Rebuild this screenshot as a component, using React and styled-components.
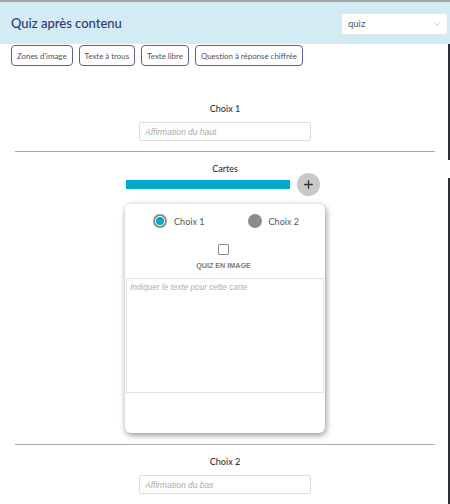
import React from "react";
import styled, { createGlobalStyle } from "styled-components";
import { ChevronDown, Plus } from "lucide-react";

const GlobalStyle = createGlobalStyle`
  body {
    margin: 0;
    background: #fff;
    font-family: "Lato", "Open Sans", sans-serif;
  }
`;

const Page = styled.div`
  position: relative;
  width: 450px;
  height: 504px;
  overflow: hidden;
`;

const Header = styled.header`
  height: 42px;
  border-top: 2px solid #a3a3a3;
  background: #d3ecf4;
  display: flex;
  align-items: center;
  justify-content: space-between;
  padding: 0 2px 0 11px;
`;

const Title = styled.h1`
  margin: 0;
  font-size: 13px;
  font-weight: 500;
  color: #2f3577;
`;

const Select = styled.div`
  width: 107px;
  height: 22px;
  box-sizing: border-box;
  margin-top: 1px;
  background: #fff;
  border: 1px solid #e2e6e8;
  border-radius: 3px;
  display: flex;
  align-items: center;
  justify-content: space-between;
  padding: 0 5px 0 6px;
  font-size: 9.5px;
  color: #555;
`;

const TypeBar = styled.nav`
  display: flex;
  gap: 6px;
  padding: 1px 11px 0;
`;

const TypeButton = styled.button`
  height: 21px;
  padding: 0 5px;
  background: #fff;
  border: 1px solid #5d5ca8;
  border-radius: 4px;
  font-family: inherit;
  font-size: 7.9px;
  color: #50505e;
  cursor: pointer;
`;

const Section = styled.section`
  display: flex;
  flex-direction: column;
  align-items: center;
  margin-top: ${(p) => p.$top}px;
`;

const Label = styled.div`
  font-size: 9px;
  font-weight: 500;
  color: #333;
  line-height: 12px;
`;

const TextInput = styled.input`
  width: 172px;
  height: 19px;
  box-sizing: border-box;
  margin-top: ${(p) => p.$top}px;
  border: 1px solid #dcdcdc;
  border-radius: 2px;
  padding: 0 5px;
  font-family: "Liberation Sans", Arial, sans-serif;
  font-size: 8.5px;
  &::placeholder {
    color: #aaa;
    font-style: italic;
  }
`;

const Rule = styled.hr`
  width: 420px;
  margin: ${(p) => p.$top}px auto 0;
  border: none;
  border-top: 1px solid #a9a9a9;
`;

const DeckBar = styled.div`
  display: flex;
  align-items: center;
  gap: 7px;
  margin-top: -2px;
  margin-left: -4px;
`;

const Progress = styled.div`
  width: 164px;
  height: 9px;
  background: #00a9c8;
`;

const AddButton = styled.button`
  width: 23px;
  height: 23px;
  border-radius: 50%;
  border: none;
  padding: 0;
  background: #c9c9c9;
  color: #333;
  display: flex;
  align-items: center;
  justify-content: center;
`;

const Card = styled.div`
  width: 200px;
  height: 229px;
  margin-top: 8px;
  background: #fff;
  border-radius: 6px;
  box-shadow: 1px 2px 6px rgba(0, 0, 0, 0.45);
  display: flex;
  flex-direction: column;
`;

const ChoiceRow = styled.div`
  display: grid;
  grid-template-columns: 1fr 1fr;
  padding-top: 10px;
  padding-left: 5px;
`;

const Choice = styled.label`
  display: flex;
  align-items: center;
  justify-content: center;
  gap: 7px;
  font-size: 9px;
  color: #555;
  margin-left: ${(p) => p.$shift || 0}px;
`;

const Radio = styled.span`
  width: 14px;
  height: 14px;
  box-sizing: border-box;
  border-radius: 50%;
  background: ${(p) => (p.$checked ? "#fff" : "#8c8c8c")};
  border: 2px solid #8c8c8c;
  display: flex;
  align-items: center;
  justify-content: center;
  &::after {
    content: "";
    display: ${(p) => (p.$checked ? "block" : "none")};
    width: 8px;
    height: 8px;
    border-radius: 50%;
    background: #00a9c8;
  }
`;

const ImageToggle = styled.div`
  display: flex;
  flex-direction: column;
  align-items: center;
  margin-top: 16px;
  margin-right: 3px;
  gap: 6px;
`;

const Checkbox = styled.span`
  width: 9px;
  height: 9px;
  border: 1px solid #8c8c8c;
  border-radius: 1px;
`;

const SmallCaps = styled.span`
  font-family: "Liberation Sans", Arial, sans-serif;
  font-size: 7.2px;
  font-weight: 700;
  color: #7a7a7a;
`;

const CardText = styled.textarea`
  margin: 8px 1px 0;
  height: 115px;
  box-sizing: border-box;
  resize: none;
  border: 1px solid #e3e3e3;
  padding: 4px 3px;
  font-family: "Liberation Sans", Arial, sans-serif;
  font-size: 8.2px;
  &::placeholder {
    color: #b0b0b0;
    font-style: italic;
  }
`;

/* thin dark scroll rail on the right edge of the editor */
const Rail = styled.div`
  position: absolute;
  right: 0;
  width: 2px;
  background: #2b2f36;
  top: ${(p) => p.$top}px;
  height: ${(p) => p.$height}px;
`;

export default function App() {
  return (
    <Page>
      <GlobalStyle />
      <Header>
        <Title>Quiz après contenu</Title>
        <Select>
          quiz
          <ChevronDown size={10} color="#aaa" strokeWidth={1.5} />
        </Select>
      </Header>
      <TypeBar>
        <TypeButton>Zones d'image</TypeButton>
        <TypeButton>Texte à trous</TypeButton>
        <TypeButton>Texte libre</TypeButton>
        <TypeButton>Question à réponse chiffrée</TypeButton>
      </TypeBar>

      <Section $top={37}>
        <Label>Choix 1</Label>
        <TextInput $top={7} placeholder="Affirmation du haut" />
      </Section>
      <Rule $top={10} />

      <Section $top={11}>
        <Label>Cartes</Label>
        <DeckBar>
          <Progress />
          <AddButton>
            <Plus size={13} strokeWidth={2.4} />
          </AddButton>
        </DeckBar>
        <Card>
          <ChoiceRow>
            <Choice>
              <Radio $checked />
              Choix 1
            </Choice>
            <Choice $shift={-6}>
              <Radio />
              Choix 2
            </Choice>
          </ChoiceRow>
          <ImageToggle>
            <Checkbox />
            <SmallCaps>QUIZ EN IMAGE</SmallCaps>
          </ImageToggle>
          <CardText placeholder="Indiquer le texte pour cette carte" />
        </Card>
      </Section>
      <Rule $top={11} />

      <Section $top={11}>
        <Label>Choix 2</Label>
        <TextInput $top={7} placeholder="Affirmation du bas" />
      </Section>

      <Rail $top={44} $height={116} />
      <Rail $top={178} $height={326} />
    </Page>
  );
}
